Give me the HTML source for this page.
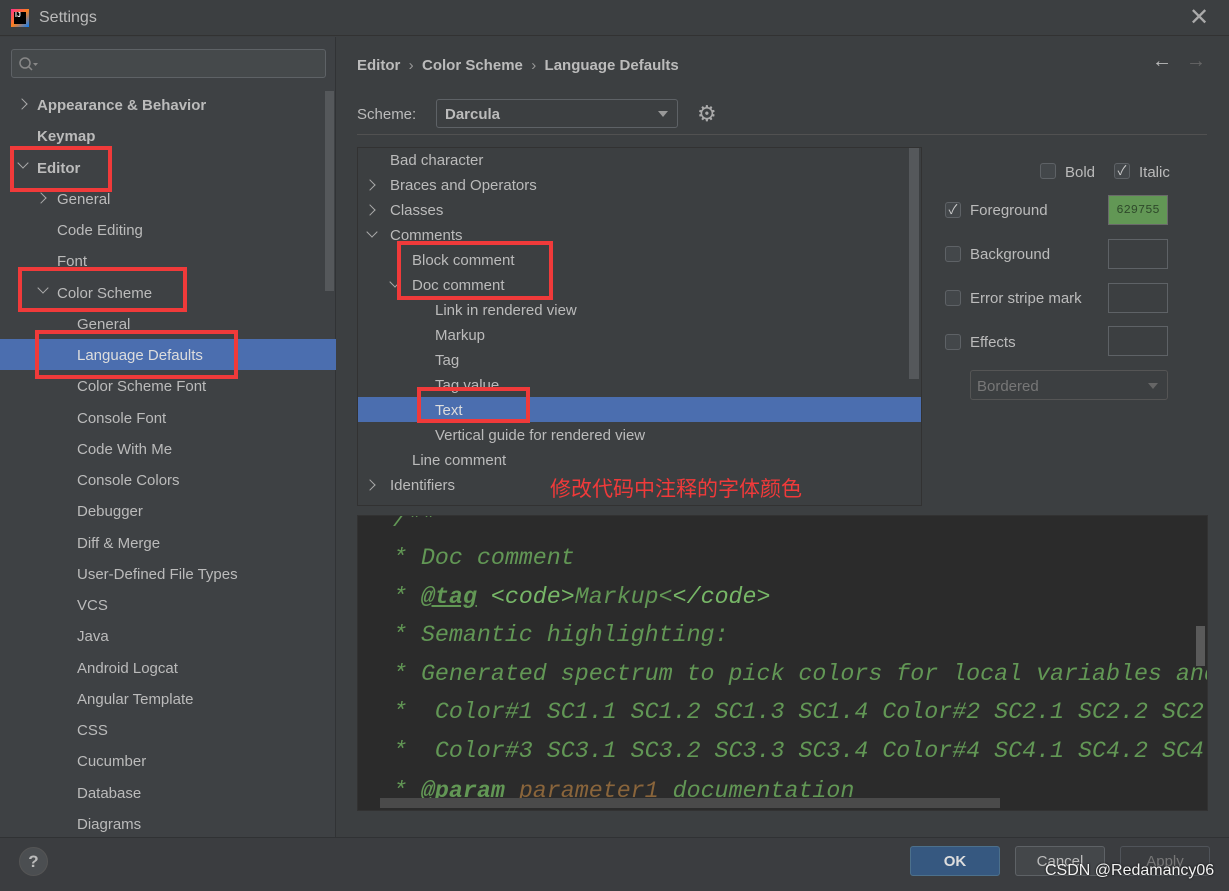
<!DOCTYPE html>
<html><head><meta charset="utf-8"><style>
*{margin:0;padding:0;box-sizing:border-box}
body{width:1229px;height:891px;background:#3c3f41;font-family:"Liberation Sans","Noto Sans CJK SC",sans-serif;font-size:15px;color:#bbbbbb;position:relative;overflow:hidden}
.a{position:absolute;white-space:nowrap}
.lt{position:absolute;white-space:nowrap;line-height:20px;margin-top:2px}
.lb{margin-top:2px}
.red{position:absolute;border:4px solid #f03a3a}
.cb{position:absolute;width:16px;height:16px;border:1px solid #5e6266;border-radius:3px;background:#43474a}
.sw{position:absolute;width:60px;height:30px;border:1px solid #5e6266}
.code{position:absolute;font-family:"Liberation Mono",monospace;font-style:italic;font-size:23.3px;color:#629755;white-space:pre;line-height:28px}
.chev{position:absolute;width:8px;height:8px;border-right:1.6px solid #aaa;border-bottom:1.6px solid #aaa}
</style></head><body>
<div class="a" style="left:0;top:0;width:1229px;height:36px;background:#3c3f41;border-bottom:1px solid #323232"></div>
<div class="a" style="left:11px;top:9px;width:18px;height:18px;background:linear-gradient(135deg,#ff318c,#fc801d 50%,#087cfa)"></div>
<div class="a" style="left:14px;top:12px;width:12px;height:12px;background:#000;color:#fff;font-size:7px;font-weight:bold;line-height:8px;padding-left:1px">IJ</div>
<div class="a" style="left:39px;top:9px;font-size:16px;color:#bbb">Settings</div>
<div class="a" style="left:1189px;top:3px;font-size:24px;color:#aaa">✕</div>
<div class="a" style="left:0;top:37px;width:336px;height:800px;background:#3e4144;border-right:1px solid #313335"></div>
<div class="a" style="left:11px;top:49px;width:315px;height:29px;border:1px solid #5e6266;border-radius:3px;background:#45494b"></div>
<svg class="a" style="left:18px;top:56px" width="22" height="16"><circle cx="7" cy="7" r="5" fill="none" stroke="#888" stroke-width="1.5"/><line x1="10.5" y1="10.5" x2="14" y2="14" stroke="#888" stroke-width="1.5"/><path d="M15 7h5l-2.5 3z" fill="#888"/></svg>
<div class="a" style="left:325px;top:91px;width:9px;height:200px;background:#55585b"></div>
<div class="a" style="left:0;top:339px;width:336px;height:31px;background:#4b6eaf"></div>
<div class="chev" style="left:18px;top:100px;transform:rotate(-45deg)"></div>
<div class="lt" style="left:37px;top:94px;font-weight:bold">Appearance &amp; Behavior</div>
<div class="lt" style="left:37px;top:125px;font-weight:bold">Keymap</div>
<div class="chev" style="left:19px;top:159px;transform:rotate(45deg)"></div>
<div class="lt" style="left:37px;top:157px;font-weight:bold">Editor</div>
<div class="chev" style="left:37px;top:194px;transform:rotate(-45deg)"></div>
<div class="lt" style="left:57px;top:188px">General</div>
<div class="lt" style="left:57px;top:219px">Code Editing</div>
<div class="lt" style="left:57px;top:250px">Font</div>
<div class="chev" style="left:39px;top:284px;transform:rotate(45deg)"></div>
<div class="lt" style="left:57px;top:282px">Color Scheme</div>
<div class="lt" style="left:77px;top:313px">General</div>
<div class="lt" style="left:77px;top:344px;color:#ddd">Language Defaults</div>
<div class="lt" style="left:77px;top:375px">Color Scheme Font</div>
<div class="lt" style="left:77px;top:407px">Console Font</div>
<div class="lt" style="left:77px;top:438px">Code With Me</div>
<div class="lt" style="left:77px;top:469px">Console Colors</div>
<div class="lt" style="left:77px;top:500px">Debugger</div>
<div class="lt" style="left:77px;top:532px">Diff &amp; Merge</div>
<div class="lt" style="left:77px;top:563px">User-Defined File Types</div>
<div class="lt" style="left:77px;top:594px">VCS</div>
<div class="lt" style="left:77px;top:625px">Java</div>
<div class="lt" style="left:77px;top:657px">Android Logcat</div>
<div class="lt" style="left:77px;top:688px">Angular Template</div>
<div class="lt" style="left:77px;top:719px">CSS</div>
<div class="lt" style="left:77px;top:750px">Cucumber</div>
<div class="lt" style="left:77px;top:782px">Database</div>
<div class="lt" style="left:77px;top:813px">Diagrams</div>
<div class="red" style="left:10px;top:146px;width:102px;height:46px"></div>
<div class="red" style="left:18px;top:267px;width:169px;height:45px"></div>
<div class="red" style="left:35px;top:330px;width:203px;height:49px"></div>
<div class="a" style="left:0;top:837px;width:1229px;height:54px;background:#3b3d40;border-top:1px solid #303234"></div>
<div class="a" style="left:19px;top:847px;width:29px;height:29px;border-radius:50%;background:#4b4e51;border:1px solid #555;color:#bbb;font-weight:bold;font-size:17px;text-align:center;line-height:27px">?</div>
<div class="a" style="left:910px;top:846px;width:90px;height:30px;background:#365880;border:1px solid #4c708c;border-radius:3px;color:#ddd;font-weight:bold;text-align:center;line-height:30px">OK</div>
<div class="a" style="left:1015px;top:846px;width:90px;height:30px;background:#44474a;border:1px solid #5e6266;border-radius:3px;text-align:center;line-height:30px">Cancel</div>
<div class="a" style="left:1120px;top:846px;width:90px;height:30px;border:1px solid #50545a;border-radius:3px;color:#777;text-align:center;line-height:30px">Apply</div>
<div class="a" style="left:1045px;top:862px;font-size:16px;color:#f2f2f2;text-shadow:0 0 2px #000">CSDN @Redamancy06</div>
<div class="a lb" style="left:357px;top:55px;font-weight:bold;font-size:15px">Editor&nbsp;&nbsp;<span style="font-weight:normal;color:#999">›</span>&nbsp;&nbsp;Color Scheme&nbsp;&nbsp;<span style="font-weight:normal;color:#999">›</span>&nbsp;&nbsp;Language Defaults</div>
<div class="a" style="left:1152px;top:50px;font-size:20px;color:#bbb">←</div>
<div class="a" style="left:1186px;top:50px;font-size:20px;color:#666">→</div>
<div class="a lb" style="left:357px;top:104px">Scheme:</div>
<div class="a" style="left:436px;top:99px;width:242px;height:29px;border:1px solid #5e6266;border-radius:3px;background:#3c3f41"></div>
<div class="a lb" style="left:445px;top:104px;font-weight:bold">Darcula</div>
<div class="a" style="left:658px;top:111px;border-left:5px solid transparent;border-right:5px solid transparent;border-top:6px solid #999"></div>
<div class="a" style="left:697px;top:102px;font-size:22px;color:#aaa;line-height:24px">⚙</div>
<div class="a" style="left:357px;top:134px;width:850px;height:1px;background:#515151"></div>
<div class="a" style="left:357px;top:147px;width:565px;height:359px;border:1px solid #323232;background:#3c3f41;overflow:hidden"></div>
<div class="a" style="left:909px;top:148px;width:10px;height:231px;background:#55585b"></div>
<div class="a" style="left:358px;top:397px;width:563px;height:25px;background:#4b6eaf"></div>
<div class="lt" style="left:390px;top:149px">Bad character</div>
<div class="chev" style="left:366px;top:181px;transform:rotate(-45deg)"></div>
<div class="lt" style="left:390px;top:174px">Braces and Operators</div>
<div class="chev" style="left:366px;top:206px;transform:rotate(-45deg)"></div>
<div class="lt" style="left:390px;top:199px">Classes</div>
<div class="chev" style="left:368px;top:228px;transform:rotate(45deg)"></div>
<div class="lt" style="left:390px;top:224px">Comments</div>
<div class="lt" style="left:412px;top:249px">Block comment</div>
<div class="chev" style="left:391px;top:278px;transform:rotate(45deg)"></div>
<div class="lt" style="left:412px;top:274px">Doc comment</div>
<div class="lt" style="left:435px;top:299px">Link in rendered view</div>
<div class="lt" style="left:435px;top:324px">Markup</div>
<div class="lt" style="left:435px;top:349px">Tag</div>
<div class="lt" style="left:435px;top:374px">Tag value</div>
<div class="lt" style="left:435px;top:399px;color:#ddd">Text</div>
<div class="lt" style="left:435px;top:424px">Vertical guide for rendered view</div>
<div class="lt" style="left:412px;top:449px">Line comment</div>
<div class="chev" style="left:366px;top:481px;transform:rotate(-45deg)"></div>
<div class="lt" style="left:390px;top:474px">Identifiers</div>
<div class="red" style="left:397px;top:241px;width:156px;height:59px"></div>
<div class="red" style="left:417px;top:387px;width:113px;height:36px"></div>
<div class="a" style="left:550px;top:473px;font-size:21px;color:#f03a3a;font-family:'Liberation Sans','Noto Sans CJK SC',sans-serif">修改代码中注释的字体颜色</div>
<div class="cb" style="left:1040px;top:163px"></div><div class="a lb" style="left:1065px;top:162px">Bold</div>
<div class="cb" style="left:1114px;top:163px;color:#ccc;font-size:13px;line-height:14px;text-align:center">✓</div><div class="a lb" style="left:1139px;top:162px">Italic</div>
<div class="cb" style="left:945px;top:202px;color:#ccc;font-size:13px;line-height:14px;text-align:center">✓</div><div class="a lb" style="left:970px;top:200px">Foreground</div>
<div class="sw" style="left:1108px;top:195px;background:#629755;border-color:#6a6a6a;font-family:'Liberation Mono',monospace;font-size:12px;color:#2f4a2b;text-align:center;line-height:28px">629755</div>
<div class="cb" style="left:945px;top:246px"></div><div class="a lb" style="left:970px;top:244px">Background</div>
<div class="sw" style="left:1108px;top:239px"></div>
<div class="cb" style="left:945px;top:290px"></div><div class="a lb" style="left:970px;top:288px">Error stripe mark</div>
<div class="sw" style="left:1108px;top:283px"></div>
<div class="cb" style="left:945px;top:334px"></div><div class="a lb" style="left:970px;top:332px">Effects</div>
<div class="sw" style="left:1108px;top:326px"></div>
<div class="a" style="left:970px;top:370px;width:198px;height:30px;border:1px solid #555;border-radius:3px"></div>
<div class="a lb" style="left:977px;top:376px;color:#777">Bordered</div>
<div class="a" style="left:1148px;top:383px;border-left:5px solid transparent;border-right:5px solid transparent;border-top:6px solid #666"></div>
<div class="a" style="left:357px;top:515px;width:851px;height:296px;background:#2b2b2b;border:1px solid #323232;overflow:hidden">
<div class="code" style="left:21px;top:-10px"> /**</div>
<div class="code" style="left:21px;top:28px"> * Doc comment</div>
<div class="code" style="left:21px;top:67px"> * <span style="font-weight:bold;text-decoration:underline">@tag</span> <span style="color:#77b767">&lt;code&gt;</span>Markup&lt;<span style="color:#77b767">&lt;/code&gt;</span></div>
<div class="code" style="left:21px;top:105px"> * Semantic highlighting:</div>
<div class="code" style="left:21px;top:144px"> * Generated spectrum to pick colors for local variables and</div>
<div class="code" style="left:21px;top:182px"> *  Color#1 SC1.1 SC1.2 SC1.3 SC1.4 Color#2 SC2.1 SC2.2 SC2</div>
<div class="code" style="left:21px;top:221px"> *  Color#3 SC3.1 SC3.2 SC3.3 SC3.4 Color#4 SC4.1 SC4.2 SC4</div>
<div class="code" style="left:21px;top:261px"> * <span style="font-weight:bold;text-decoration:underline">@param</span> <span style="color:#8a653b">parameter1</span> documentation</div>
<div class="a" style="left:22px;top:282px;width:620px;height:10px;background:#4a4a4a"></div>
<div class="a" style="left:838px;top:110px;width:9px;height:40px;background:#5a5a5a"></div>
</div>
</body></html>
